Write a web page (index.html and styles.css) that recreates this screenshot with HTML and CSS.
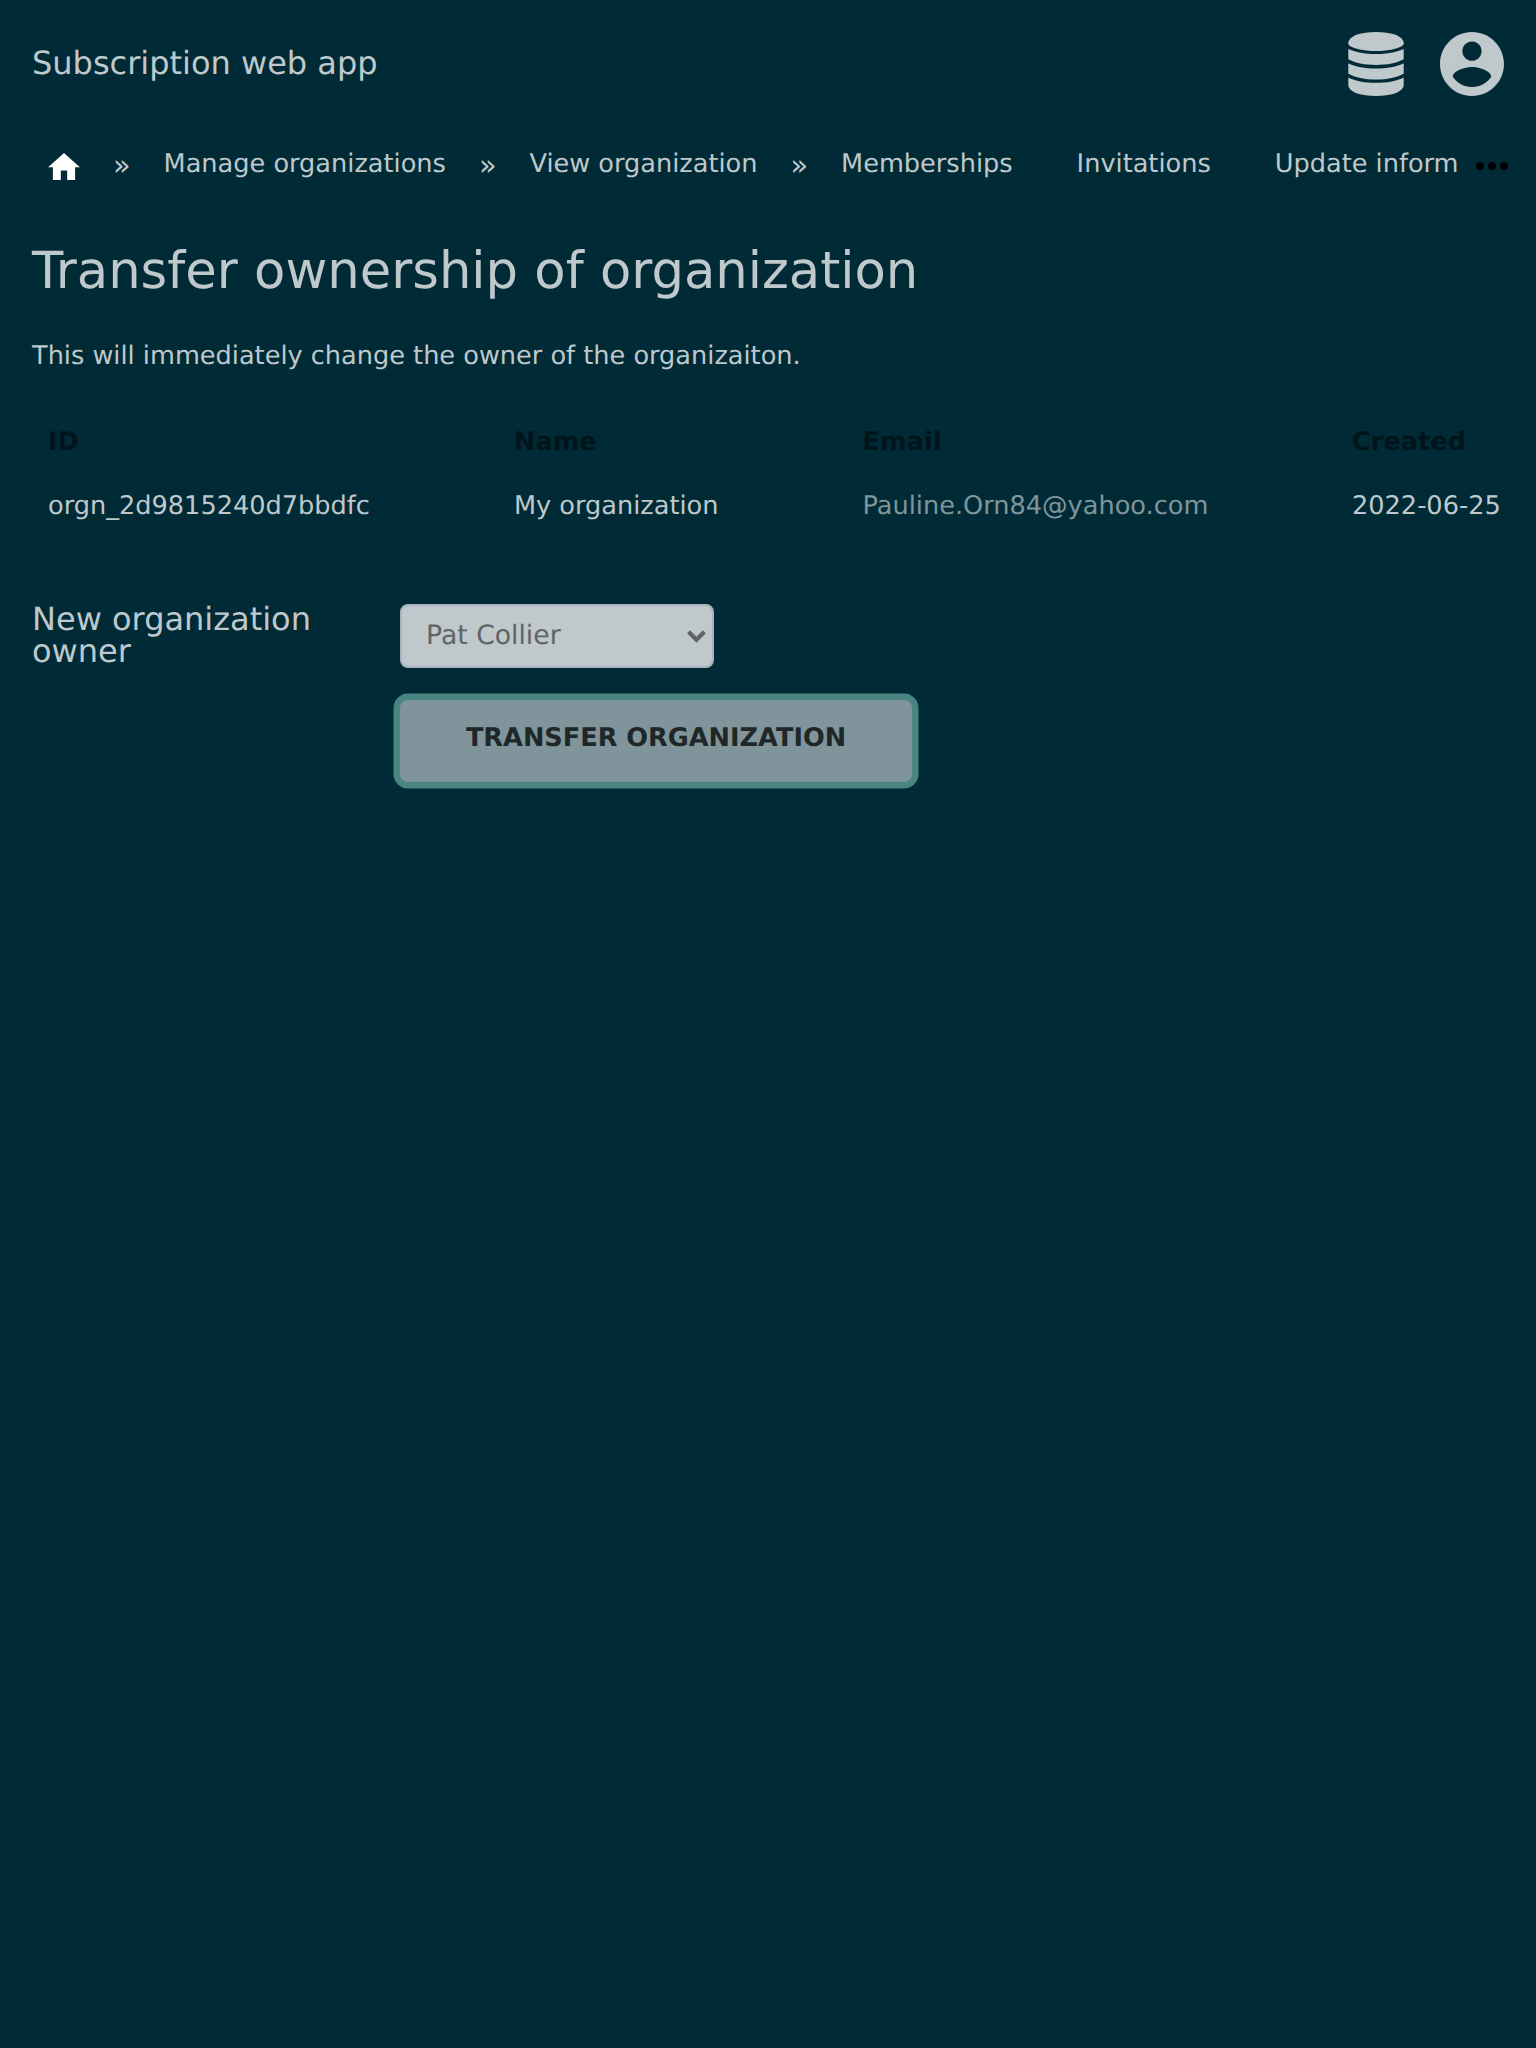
FILE: index.html
```html
<!DOCTYPE html>
<html lang="en">
<head>
<meta charset="utf-8">
<title>Transfer ownership of organization</title>
<link rel="stylesheet" href="styles.css">
</head>
<body>
<header class="header">
  <div class="brand">Subscription web app</div>
  <div class="menus">
    <svg class="icon-db" viewBox="0 0 56 64" fill="currentColor"><path d="M0.300 10C2 3.500 13 0 28 0S54 3.500 55.700 10V12.500C52 16.500 41 19 28 19S4 16.500 0.300 12.500Z"/><path d="M0.300 17C7 20 17 22 28 22S49 20 55.700 17V27.300C49 31 39 33 28 33S7 31 0.300 27.300Z"/><path d="M0.300 31.200C7 34.500 17 36.500 28 36.500S49 34.500 55.700 31.200V41.700C49 45.500 39 47.500 28 47.500S7 45.500 0.300 41.700Z"/><path d="M0.300 45.400C7 49 17 50.800 28 50.800S49 49 55.700 45.400V54C54 60.500 43 64 28 64S2 60.500 0.300 54Z"/></svg>
    <svg class="icon-user" viewBox="2 2 20 20" fill="currentColor"><path d="M12 2C6.480 2 2 6.480 2 12s4.480 10 10 10 10-4.480 10-10S17.520 2 12 2zm0 3c1.660 0 3 1.340 3 3s-1.340 3-3 3-3-1.340-3-3 1.340-3 3-3zm0 14.200c-2.500 0-4.710-1.280-6-3.220.030-1.990 4-3.080 6-3.080 1.990 0 5.970 1.090 6 3.080-1.290 1.940-3.500 3.220-6 3.220z"/></svg>
  </div>
</header>
<nav class="nav">
  <svg class="icon-home" viewBox="2 3 20 17" fill="currentColor"><path d="M10 20v-6h4v6h5v-8h3L12 3 2 12h3v8z"/></svg>
  <span class="sep">»</span>
  <a class="crumb">Manage organizations</a>
  <span class="sep">»</span>
  <a class="crumb">View organization</a>
  <span class="sep">»</span>
  <a class="crumb">Memberships</a>
  <a class="crumb next">Invitations</a>
  <a class="crumb next">Update inform</a>
  <svg class="icon-more" viewBox="0 0 32 8"><circle cx="4" cy="4" r="4"/><circle cx="16" cy="4" r="4"/><circle cx="28" cy="4" r="4"/></svg>
</nav>
<main class="main">
  <h1 class="title">Transfer ownership of organization</h1>
  <p class="lead">This will immediately change the owner of the organizaiton.</p>
  <table class="table">
    <thead><tr><th class="c-id">ID</th><th class="c-name">Name</th><th class="c-email">Email</th><th>Created</th></tr></thead>
    <tbody><tr><td>orgn_2d9815240d7bbdfc</td><td>My organization</td><td class="c-email"><a class="link">Pauline.Orn84@yahoo.com</a></td><td>2022-06-25</td></tr></tbody>
  </table>
  <form class="form">
    <label class="label">New organization owner</label>
    <div class="controls">
      <div class="select"><span class="value">Pat Collier</span><svg class="chevron" viewBox="0 0 18 12"><path d="M1.500 1.500L9 9L16.500 1.500" fill="none" stroke="currentColor" stroke-width="4"/></svg></div>
      <button class="button" type="button">TRANSFER ORGANIZATION</button>
    </div>
  </form>
</main>
</body>
</html>
```
FILE: styles.css
```css
* { box-sizing: border-box; }
body {
  margin: 0;
  min-height: 2048px;
  background: #002b36;
  color: #bfc8cb;
  font: 25.6px/32px "DejaVu Sans", sans-serif;
  text-rendering: geometricPrecision;
}
svg { display: block; flex: none; }
.header {
  display: flex;
  align-items: center;
  justify-content: space-between;
  height: 128px;
  padding: 0 32px;
}
.brand { margin-top: -2px; font-size: 32px; }
.menus { display: flex; gap: 36px; }
.icon-db { width: 56px; height: 64px; }
.icon-user { width: 64px; height: 64px; }
.nav {
  display: flex;
  align-items: center;
  height: 72px;
  padding: 0 28px 0 48px;
  white-space: nowrap;
}
.icon-home { width: 32px; height: 27px; color: #fff; margin-top: 4px; }
.sep { width: 16px; margin: 2px 34.6px 0 33px; font-size: 28.8px; }
.next { margin-left: 64px; }
.icon-more { width: 32px; height: 8px; margin: 4px 0 0 auto; }
.main { padding: 0 32px; }
.title {
  margin: 39px 0 0;
  font-size: 51.2px;
  font-weight: 400;
  line-height: 64px;
}
.lead { margin: 37px 0 0; }
.table {
  width: 1504px;
  margin-top: 38px;
  border-collapse: collapse;
  table-layout: fixed;
}
.table th, .table td {
  height: 64px;
  padding: 0 0 0 16px;
  text-align: left;
  white-space: nowrap;
}
.table th { color: #00151b; }
.c-id { width: 466px; }
.c-name { width: 348px; }
.table .c-email { width: 490px; padding-left: 16.5px; }
.link { color: #80959b; }
.form { display: flex; margin-top: 65px; }
.label {
  width: 368px;
  padding-right: 60px;
  font-size: 32px;
  line-height: 32px;
}
.controls {
  display: flex;
  flex-direction: column;
  align-items: flex-start;
  gap: 32px;
  margin-top: 1px;
}
.select {
  display: flex;
  align-items: center;
  justify-content: space-between;
  width: 314px;
  height: 64px;
  padding: 0 6px 2px 24px;
  border: 2px solid #a5b4c0;
  border-radius: 8px;
  background: #bfc8cb;
  color: #606465;
  font-size: 26.67px;
}
.value { margin-top: 2px; }
.chevron { width: 19px; height: 13px; margin-top: 3px; }
.button {
  width: 512px;
  height: 82px;
  padding: 0 0 6px;
  border: 0;
  border-radius: 8px;
  background: #80959b;
  box-shadow: 0 0 0 6.5px #488583;
  color: #202728;
  font: bold 25.6px/32px "DejaVu Sans", sans-serif;
  text-rendering: geometricPrecision;
}
```
